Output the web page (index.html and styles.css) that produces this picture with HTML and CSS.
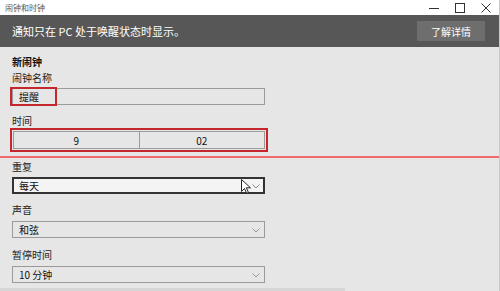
FILE: index.html
```html
<!DOCTYPE html>
<html lang="zh-CN">
<head>
    <meta charset="UTF-8">
    <title>闹钟和时钟</title>
    <link rel="stylesheet" href="styles.css">
</head>
<body>
    <div class="window">
        <!-- barra de título -->
        <div class="titlebar">
            <span class="title">闹钟和时钟</span>
            <div class="controls">
                <span class="ctl">
                    <svg width="10" height="10" viewBox="0 0 10 10"><path d="M0 5.5h10" stroke="#333" stroke-width="1"/></svg>
                </span>
                <span class="ctl">
                    <svg width="10" height="10" viewBox="0 0 10 10"><rect x="0.5" y="0.5" width="9" height="9" fill="none" stroke="#333" stroke-width="1"/></svg>
                </span>
                <span class="ctl">
                    <svg width="10" height="10" viewBox="0 0 10 10"><path d="M0.5 0.5l9 9M9.5 0.5l-9 9" stroke="#333" stroke-width="1"/></svg>
                </span>
            </div>
        </div>

        <div class="banner">
            <span class="banner-text">通知只在 PC 处于唤醒状态时显示。</span>
            <button class="banner-button">了解详情</button>
        </div>

        <div class="content">
            <div class="heading">新闹钟</div>

            <div class="label">闹钟名称</div>
            <div class="field name-field">
                <span class="field-text">提醒</span>
                <span class="mark"></span>
            </div>

            <div class="label gap-lg">时间</div>
            <div class="time-frame">
                <div class="time-box">
                    <div class="time-cell">9</div>
                    <div class="time-cell">02</div>
                </div>
            </div>

            <div class="divider"></div>

            <div class="label">重复</div>
            <div class="field select active">
                <span class="field-text">每天</span>
                <svg class="cursor" width="10" height="15" viewBox="0 0 10 15">
                    <path d="M0.5 0.5v12l3-3 2.2 4.8 1.8-0.8-2.2-4.7h4.2z" fill="#fff" stroke="#222" stroke-width="1"/>
                </svg>
                <svg class="chevron" width="8" height="5" viewBox="0 0 8 5"><path d="M0.5 0.5l3.5 3.5 3.5-3.5" fill="none" stroke="#888" stroke-width="1"/></svg>
            </div>

            <div class="label gap-lg">声音</div>
            <div class="field select">
                <span class="field-text">和弦</span>
                <svg class="chevron" width="8" height="5" viewBox="0 0 8 5"><path d="M0.5 0.5l3.5 3.5 3.5-3.5" fill="none" stroke="#999" stroke-width="1"/></svg>
            </div>

            <div class="label gap-xl">暂停时间</div>
            <div class="field select">
                <span class="field-text">10 分钟</span>
                <svg class="chevron" width="8" height="5" viewBox="0 0 8 5"><path d="M0.5 0.5l3.5 3.5 3.5-3.5" fill="none" stroke="#999" stroke-width="1"/></svg>
            </div>

            <div class="scroll-strip"></div>
        </div>
    </div>
</body>
</html>
```

FILE: styles.css
```css
body {
    margin: 0;
    font-family: "Noto Sans CJK SC", "Noto Sans", sans-serif;
    background-color: #e6e6e6;
    color: #111;
}
.window {
    width: 500px;
    height: 291px;
    overflow: hidden;
    border-right: 1px solid #c8c8c8;
    box-sizing: border-box;
}
.titlebar {
    height: 15px;
    background-color: #fff;
    display: flex;
    align-items: center;
    justify-content: space-between;
    padding-left: 5px;
}
.title {
    font-size: 8px;
    color: #555;
}
.controls {
    display: flex;
    align-items: center;
    gap: 16px;
    padding-right: 8px;
}
.ctl {
    width: 10px;
    height: 10px;
    display: flex;
}
.banner {
    height: 32px;
    background-color: #575757;
    display: flex;
    align-items: center;
    justify-content: space-between;
    padding: 0 14px 0 12px;
}
.banner-text {
    font-size: 11px;
    color: #fff;
}
.banner-button {
    width: 68px;
    height: 20px;
    border: none;
    background-color: #6e6e6e;
    color: #fff;
    font-family: inherit;
    font-size: 10px;
    padding: 0;
}
.content {
    padding: 8px 0 0 12px;
}
.heading {
    font-size: 10px;
    font-weight: bold;
    line-height: 14px;
}
.label {
    font-size: 10px;
    line-height: 14px;
    margin-top: 2px;
    color: #222;
}
.gap-lg {
    margin-top: 9px;
}
.gap-xl {
    margin-top: 10px;
}
.field {
    position: relative;
    box-sizing: border-box;
    width: 253px;
    height: 17px;
    border: 1px solid #9a9a9a;
    display: flex;
    align-items: center;
    padding-left: 6px;
    margin-top: 3px;
    font-size: 10px;
}
.select {
    margin-top: 4px;
}
.select.active {
    margin-top: 3px;
    border: 2px solid #333;
    background-color: #f4f4f4;
    padding-left: 5px;
}
.field-text {
    line-height: 14px;
}
.mark {
    position: absolute;
    left: -3px;
    top: -2px;
    width: 47px;
    height: 19px;
    box-sizing: border-box;
    border: 2px solid #c4282d;
}
.chevron {
    position: absolute;
    right: 4px;
    top: 6px;
}
.select.active .chevron {
    right: 3px;
    top: 5px;
}
.cursor {
    position: absolute;
    left: 227px;
    top: 0px;
}
.time-frame {
    box-sizing: border-box;
    width: 258px;
    height: 24px;
    margin-left: -2px;
    border: 2px solid #c4282d;
    padding: 1px;
}
.time-box {
    height: 100%;
    box-sizing: border-box;
    border: 1px solid #9a9a9a;
    display: flex;
}
.time-cell {
    flex: 1;
    display: flex;
    align-items: center;
    justify-content: center;
    font-size: 10px;
}
.time-cell + .time-cell {
    border-left: 1px solid #9a9a9a;
}
.divider {
    height: 2px;
    background-color: #ef6b6b;
    margin: 4px 0 0 -12px;
}
.scroll-strip {
    width: 345px;
    height: 3px;
    margin: 5px 0 0 -12px;
    background-color: #d6d6d6;
}
```
